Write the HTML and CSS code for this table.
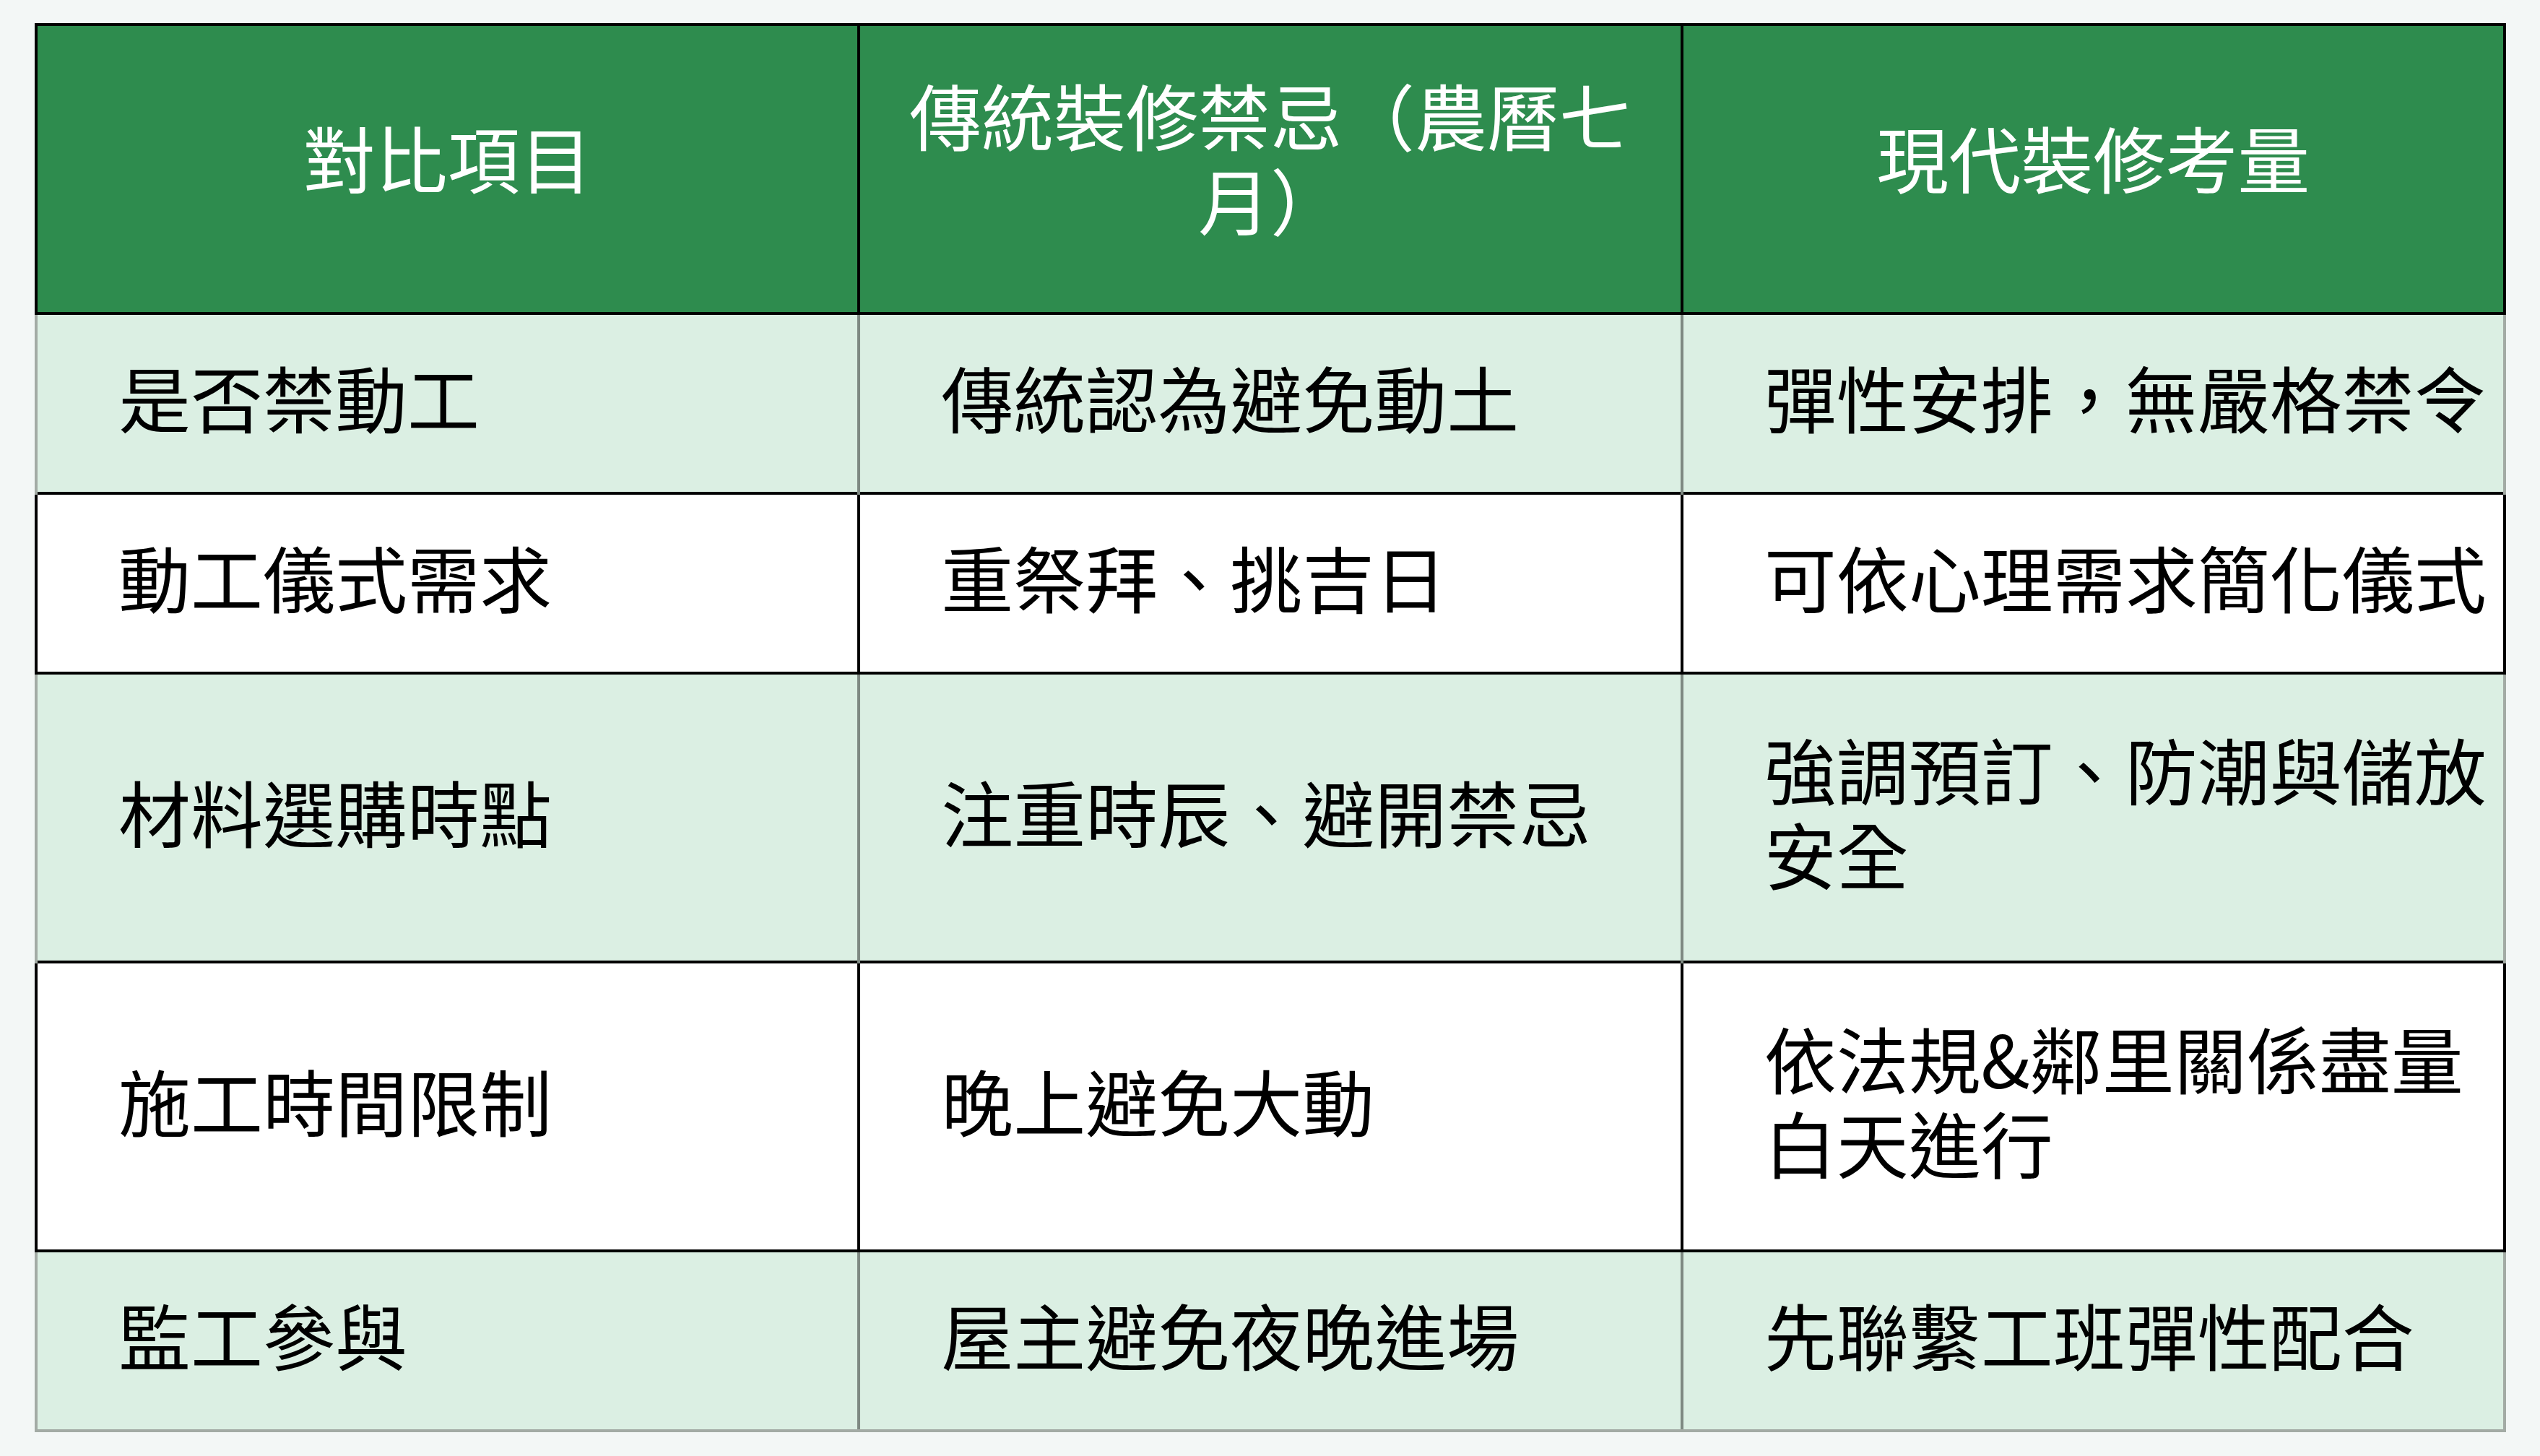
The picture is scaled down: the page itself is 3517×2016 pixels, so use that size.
FILE: index.html
```html
<!DOCTYPE html>
<html lang="zh-Hant">
<head>
<meta charset="utf-8">
<title>農曆七月裝修對比</title>
<link rel="stylesheet" href="styles.css">
</head>
<body>
<div class="page">
  <table class="compare">
    <colgroup>
      <col class="c"><col class="c"><col class="c">
    </colgroup>
    <thead>
      <tr class="head tall">
        <th>對比項目</th>
        <th>傳統裝修禁忌（農曆七月）</th>
        <th>現代裝修考量</th>
      </tr>
    </thead>
    <tbody>
      <tr class="tint">
        <td>是否禁動工</td>
        <td>傳統認為避免動土</td>
        <td>彈性安排，無嚴格禁令</td>
      </tr>
      <tr class="plain">
        <td>動工儀式需求</td>
        <td>重祭拜、挑吉日</td>
        <td>可依心理需求簡化儀式</td>
      </tr>
      <tr class="tint tall">
        <td>材料選購時點</td>
        <td>注重時辰、避開禁忌</td>
        <td>強調預訂、防潮與儲放安全</td>
      </tr>
      <tr class="plain tall">
        <td>施工時間限制</td>
        <td>晚上避免大動</td>
        <td>依法規&amp;鄰里關係盡量白天進行</td>
      </tr>
      <tr class="tint last">
        <td>監工參與</td>
        <td>屋主避免夜晚進場</td>
        <td>先聯繫工班彈性配合</td>
      </tr>
    </tbody>
  </table>
</div>
</body>
</html>
```

FILE: styles.css
```css
html, body {
  margin: 0;
  padding: 0;
  background: #f3f7f6;
}

.page {
  padding: 32px 0 0 48px;
}

.compare {
  width: 3422px;
  table-layout: fixed;
  border-collapse: collapse;
  font-family: "Noto Sans CJK TC", "Noto Sans CJK SC", "Noto Sans", sans-serif;
  font-size: 100px;
  line-height: 1.17;
}

.compare .c {
  width: 33.333%;
}

.compare th {
  background: #2e8c4e;
  color: #ffffff;
  font-weight: 400;
  text-align: center;
  vertical-align: middle;
  padding: 0 38px 36px;
  border: 4px solid #000000;
}

.compare td {
  color: #000000;
  font-weight: 400;
  text-align: left;
  vertical-align: middle;
  padding: 54px 14px 74px 112px;
}

.compare tr.tall {
  height: 400px;
}

.compare tr.plain td {
  background: #ffffff;
  border: 4px solid #000000;
}

.compare tr.tint td {
  background: #dbefe3;
  border-left: 4px solid #7e8982;
  border-right: 4px solid #7e8982;
}

.compare tr.tint td:first-child {
  border-left-color: #a3aba5;
}

.compare tr.tint td:last-child {
  border-right-color: #a3aba5;
}

.compare tr.last td {
  border-bottom: 4px solid #a3aba5;
}
```
